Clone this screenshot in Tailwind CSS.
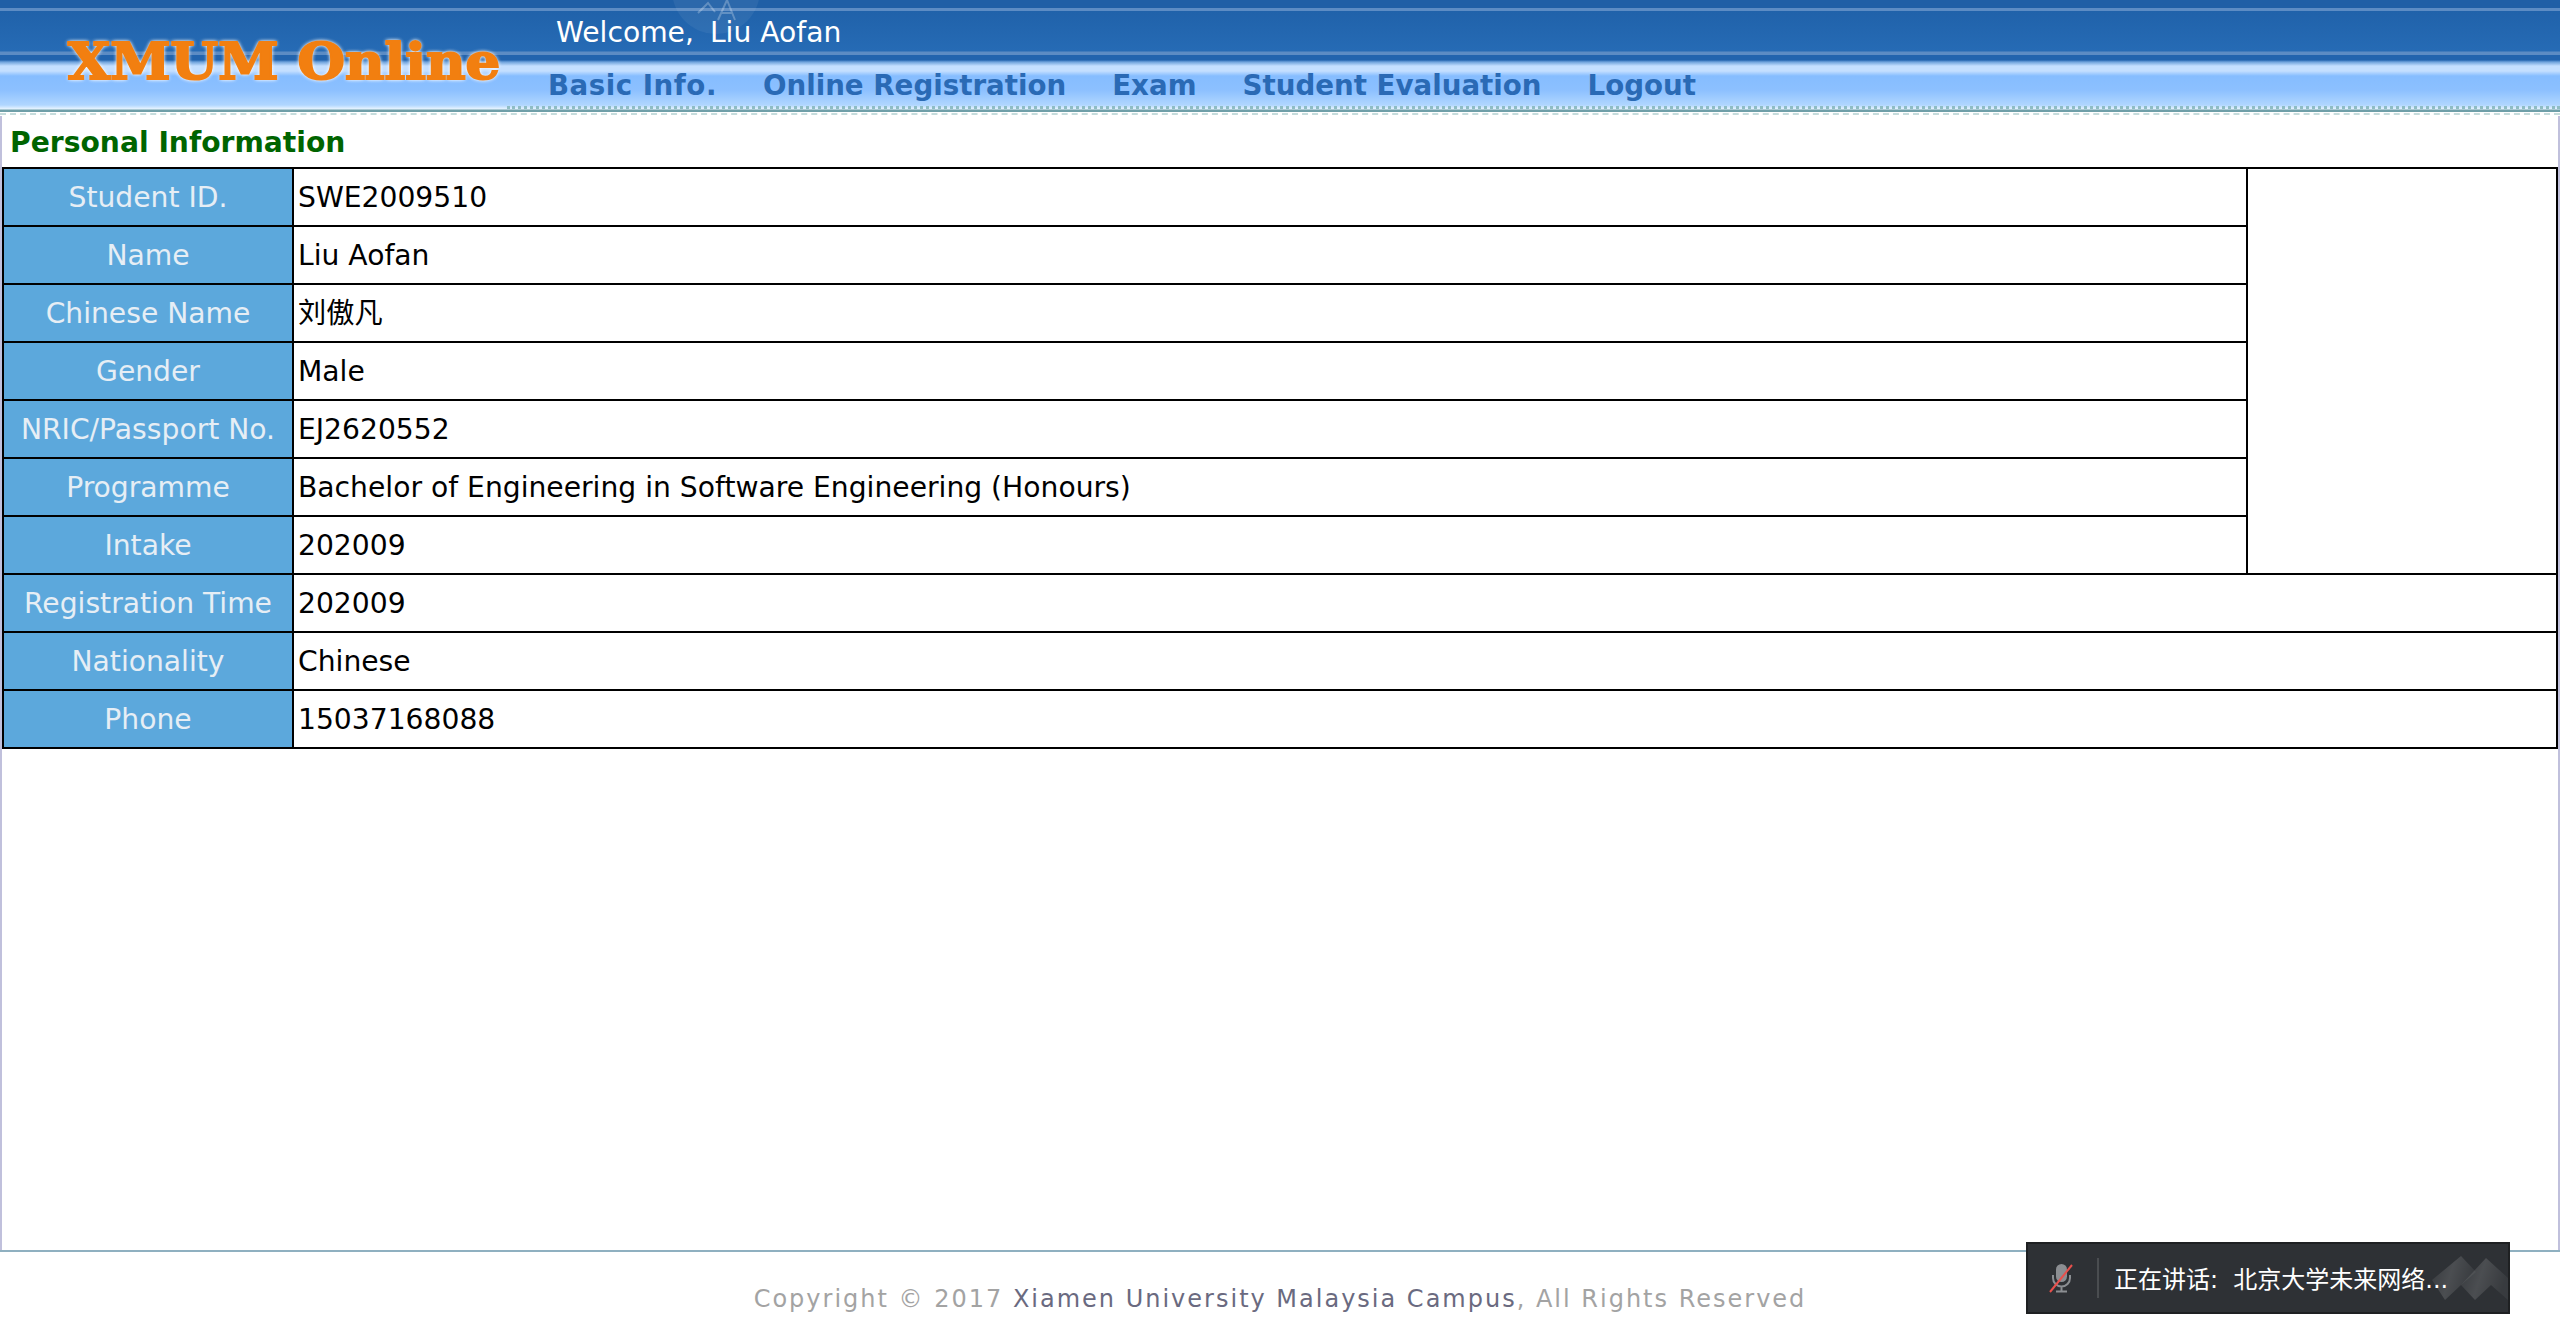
<!DOCTYPE html>
<html lang="en">
<head>
  <meta charset="UTF-8" />
  <title>XMUM Online</title>
  <script src="https://cdn.jsdelivr.net/npm/@tailwindcss/browser@4"></script>
</head>
<body class="bg-white font-['DejaVu_Sans','Noto_Sans_CJK_SC',sans-serif] text-black">
  <div class="relative flex h-[1330px] w-[2560px] flex-col overflow-hidden">

    <!-- header -->
    <header class="relative h-[116px] shrink-0 bg-[linear-gradient(to_bottom,#1f5fa6_0px,#1f5fa6_8px,#5c8cc4_8px,#5c8cc4_11px,#2062aa_11px,#266bb5_51px,#5c8cc4_52px,#5c8cc4_55px,#2264ae_55px,#2264ae_60px,#6fa3dc_62px,#c4dfff_66px,#c4dfff_71px,#86bdff_76px,#8cc0ff_90px,#b0d6ff_105px,#e8f4ff_109px,#6f9fa8_110px,#6f9fa8_112px,#ffffff_112px,#ffffff_116px)]">
      <svg class="absolute top-0 left-[670px] h-[40px] w-[96px]" viewBox="0 0 96 40" fill="none">
        <circle cx="46" cy="-10" r="44" fill="#ffffff" fill-opacity="0.06" />
        <path d="M28 13L38 3L45 12M48 20L57 0L65 20M51 13H62" stroke="#ffffff" stroke-opacity="0.25" stroke-width="2" />
      </svg>
      <div class="absolute top-[27px] left-[68px] origin-left scale-x-[1.09] font-['DejaVu_Serif',serif] text-[50px] leading-[70px] font-bold whitespace-nowrap text-[#f27f10] [-webkit-text-stroke:2px_#f27f10] [text-shadow:0_0_4px_#fff,0_0_4px_#fff,0_0_2px_#fff]">XMUM Online</div>
      <div class="ml-[556px] flex h-full flex-col">
        <div class="mt-[16px] text-[28.2px] leading-[34px] text-white">Welcome,<span class="ml-[16px]">Liu Aofan</span></div>
        <nav class="mt-[19px] -ml-[8px] flex gap-[46px] text-[27.7px] leading-[34px] font-bold text-[#2a6ab5]">
          <span class="tracking-[0.5px]">Basic Info.</span><span>Online Registration</span><span>Exam</span><span>Student Evaluation</span><span>Logout</span>
        </nav>
      </div>
      <div class="absolute top-[106px] right-0 left-[507px] border-t-[3px] border-dotted border-[#8fbdc4]"></div>
      <div class="absolute top-[113px] right-0 left-0 border-t-[2px] border-dashed border-[#c6dcdc]"></div>
    </header>

    <!-- main -->
    <main class="flex-1 border-x-2 border-[#c0c0dc]">
      <h2 class="mt-[9px] ml-[8px] text-[28.2px] leading-[36px] font-bold text-[#006400]">Personal Information</h2>
      <table class="mt-[6px] w-[2556px] table-fixed border-collapse text-[28.2px] [&_td]:pt-[2px] [&_th]:pt-[2px]">
        <colgroup><col class="w-[290px]" /><col /><col class="w-[310px]" /></colgroup>
        <tbody>
          <tr class="h-[58px]">
            <th class="border-2 border-black bg-[#5ca8dc] text-center font-normal text-[#e6eef5]">Student ID.</th>
            <td class="border-2 border-black pl-1">SWE2009510</td>
            <td rowspan="7" class="border-2 border-black"></td>
          </tr>
          <tr class="h-[58px]">
            <th class="border-2 border-black bg-[#5ca8dc] text-center font-normal text-[#e6eef5]">Name</th>
            <td class="border-2 border-black pl-1">Liu Aofan</td>
          </tr>
          <tr class="h-[58px]">
            <th class="border-2 border-black bg-[#5ca8dc] text-center font-normal text-[#e6eef5]">Chinese Name</th>
            <td class="border-2 border-black pl-1">刘傲凡</td>
          </tr>
          <tr class="h-[58px]">
            <th class="border-2 border-black bg-[#5ca8dc] text-center font-normal text-[#e6eef5]">Gender</th>
            <td class="border-2 border-black pl-1">Male</td>
          </tr>
          <tr class="h-[58px]">
            <th class="border-2 border-black bg-[#5ca8dc] text-center font-normal text-[#e6eef5]">NRIC/Passport No.</th>
            <td class="border-2 border-black pl-1">EJ2620552</td>
          </tr>
          <tr class="h-[58px]">
            <th class="border-2 border-black bg-[#5ca8dc] text-center font-normal text-[#e6eef5]">Programme</th>
            <td class="border-2 border-black pl-1">Bachelor of Engineering in Software Engineering (Honours)</td>
          </tr>
          <tr class="h-[58px]">
            <th class="border-2 border-black bg-[#5ca8dc] text-center font-normal text-[#e6eef5]">Intake</th>
            <td class="border-2 border-black pl-1">202009</td>
          </tr>
          <tr class="h-[58px]">
            <th class="border-2 border-black bg-[#5ca8dc] text-center font-normal text-[#e6eef5]">Registration Time</th>
            <td colspan="2" class="border-2 border-black pl-1">202009</td>
          </tr>
          <tr class="h-[58px]">
            <th class="border-2 border-black bg-[#5ca8dc] text-center font-normal text-[#e6eef5]">Nationality</th>
            <td colspan="2" class="border-2 border-black pl-1">Chinese</td>
          </tr>
          <tr class="h-[58px]">
            <th class="border-2 border-black bg-[#5ca8dc] text-center font-normal text-[#e6eef5]">Phone</th>
            <td colspan="2" class="border-2 border-black pl-1">15037168088</td>
          </tr>
        </tbody>
      </table>
    </main>

    <!-- footer -->
    <footer class="h-[80px] shrink-0 border-t-2 border-[#8fb0c0] pt-[31px] text-center text-[24px] leading-[32px] tracking-[2px] text-[#a3a3a3]">
      Copyright © 2017 <span class="text-[#6a6a80]">Xiamen University Malaysia Campus</span>, All Rights Reserved
    </footer>

    <!-- voice call toast -->
    <div class="absolute top-[1242px] left-[2026px] flex h-[72px] w-[484px] items-center overflow-hidden border-2 border-[#1e2022] bg-[#2e3135]">
      <svg class="ml-[20px] h-[30px] w-[26px] shrink-0" viewBox="0 0 26 30" fill="none">
        <rect x="8" y="1" width="11" height="18" rx="5.500" fill="#8b8e92" />
        <path d="M5 12v3a8.500 8.500 0 0 0 17 0v-3M13.500 24v4M8 28.500h11" stroke="#8b8e92" stroke-width="2" />
        <path d="M2 29L24 2" stroke="#e8504c" stroke-width="2" />
      </svg>
      <div class="ml-[23px] h-[40px] w-[2px] shrink-0 bg-[#4a4d50]"></div>
      <span class="relative z-10 ml-[15px] pt-[4px] text-[24px] whitespace-nowrap text-white">正在讲话:&nbsp;&nbsp;北京大学未来网络...</span>
      <svg class="absolute top-0 left-[404px] h-[68px] w-[76px]" viewBox="2432 1244 76 68">
        <defs>
          <linearGradient id="toastFade" x1="0" y1="0" x2="1" y2="0.3">
            <stop offset="0" stop-color="#ffffff" stop-opacity="0.04" />
            <stop offset="0.5" stop-color="#ffffff" stop-opacity="0.14" />
            <stop offset="1" stop-color="#ffffff" stop-opacity="0.05" />
          </linearGradient>
        </defs>
        <path d="M2432 1280L2461 1256L2476 1272L2461 1285L2445 1300Z" fill="url(#toastFade)" />
        <path d="M2461 1285L2486 1258L2508 1278V1300L2491 1285L2475 1300Z" fill="url(#toastFade)" />
      </svg>
    </div>
  </div>
</body>
</html>
